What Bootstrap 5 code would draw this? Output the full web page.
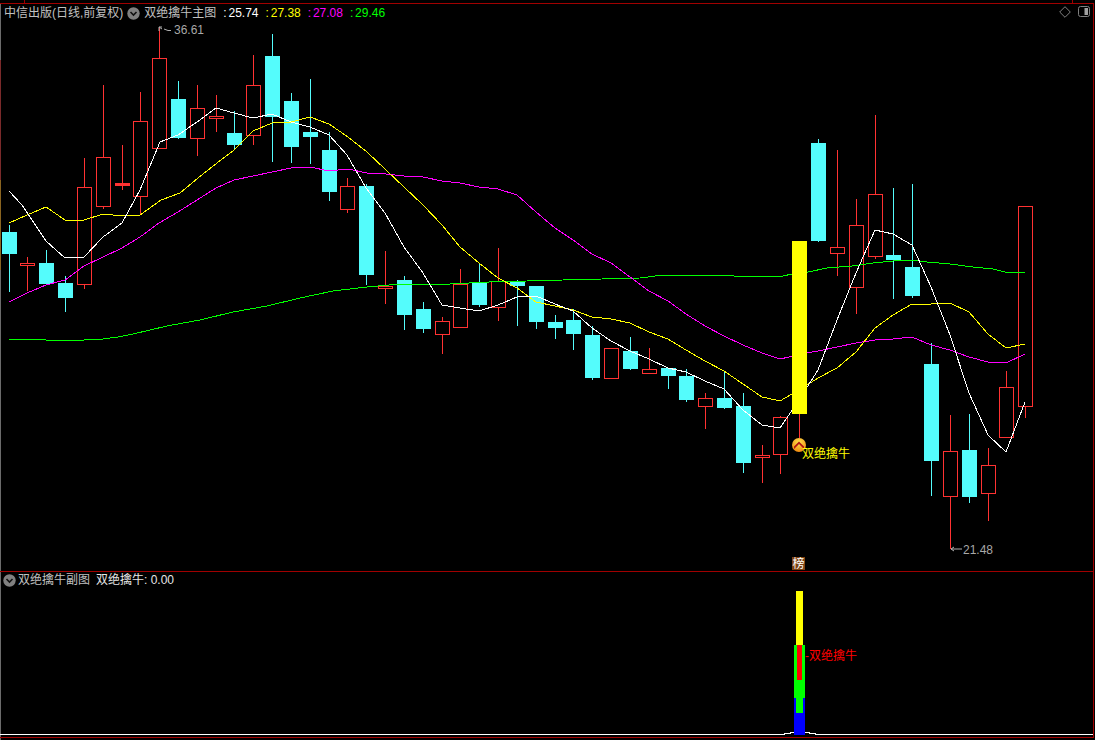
<!DOCTYPE html>
<html lang="zh-CN">
<head>
<meta charset="utf-8">
<title>双绝擒牛</title>
<link href="https://cdn.jsdelivr.net/npm/bootstrap@5.3.0/dist/css/bootstrap.min.css" rel="stylesheet">
<style>
html,body{margin:0;height:740px;overflow:hidden;background:#000;}
body{font-family:"Liberation Sans","Noto Sans CJK SC",sans-serif;font-size:12px;line-height:14px;color:#c0c0c0;}
.stage{width:1095px;height:740px;}
.pane-main{height:572px;}
.pane-sub{height:168px;}
.chart-svg{display:block;width:1095px;height:100%;}
.pane-head{top:6px;left:4px;white-space:nowrap;gap:4px;}
.pane-head-sub{top:1px;left:3px;gap:2px;}
.val-group{display:flex;gap:7px;margin-left:3px;word-spacing:-1.5px;}
.sub-title{margin-left:4px;color:#e6e6e6;}
.v-white{color:#fff;}.v-yellow{color:#ff0;}.v-magenta{color:#f0f;}.v-green{color:#0f0;}
.chev-ico{flex:none;width:13px;height:13px;display:block;}
.corner-tools{top:6px;right:4px;gap:7px;}
.svg-lab{font-family:"Liberation Sans","Noto Sans CJK SC",sans-serif;font-size:12px;}
</style>
</head>
<body>
<div class="stage d-flex flex-column">
  <section class="pane-main position-relative">
    <svg class="chart-svg" viewBox="0 0 1095 572" shape-rendering="crispEdges" fill="none" aria-label="主图K线">
      <rect x="0" y="3" width="1" height="569" fill="#6b6b6b"/>
      <rect x="0" y="60" width="1" height="120" fill="#7a2a2a"/>
      <rect x="0" y="180" width="1" height="90" fill="#8a6420"/>
      <rect x="0" y="3" width="1094" height="1" fill="#a00000"/>
      <rect x="24" y="0" width="1" height="3" fill="#a00000"/>
      <rect x="1072" y="0" width="1" height="3" fill="#a00000"/>
      <rect x="1093" y="3" width="1" height="569" fill="#a00000"/>
      <rect x="0" y="571" width="1094" height="1" fill="#a00000"/>
      <g id="candles"></g>
      <polyline stroke="#0f0" points="9,339 37,339 46,340 65,341 84,340 103,339 118,337 133,334 167,326 200,320 233,312 267,306 300,298 333,291 367,287 400,284 450,284 489,282 527,281 563,280 602,279 640,278 663,275 733,275 734,276 783,276 792,274 808,272 827,268 852,266 873,263 893,261 912,260 927,262 950,264 973,267 993,269 1005,272 1025,272"/>
      <polyline stroke="#f0f" points="9,302 27,293 46,285 65,280 84,266 103,257 122,248 140,237 159,223 178,212 197,200 216,188 234,180 253,176 272,172 291,168 310,167 329,171 348,169 367,173 386,174 404,176 423,177 442,181 460,183 479,187 498,189 517,195 536,212 555,228 573,240 592,254 611,263 630,277 649,291 668,301 686,314 705,326 724,336 743,345 762,353 780,359 807,353 818,351 837,347 856,343 875,340 893,339 912,337 931,345 950,350 969,357 988,362 1006,363 1025,354"/>
      <polyline stroke="#ff0" points="9,223 27,215 46,207 65,220 84,220 103,214 122,216 140,215 161,200 180,193 198,178 217,163 234,150 253,131 272,123 291,122 310,117 329,124 348,137 367,152 386,170 404,187 423,205 442,225 460,247 479,263 498,278 517,288 536,302 555,306 573,310 592,317 611,319 630,323 649,332 668,339 686,350 705,361 724,371 743,384 762,397 780,401 807,385 818,378 837,368 856,352 875,328 893,315 912,304 931,304 950,303 969,312 988,334 1006,348 1025,344"/>
      <polyline stroke="#fff" points="9,191 22,205 46,241 65,258 84,257 103,237 122,223 140,190 160,142 178,135 197,122 216,108 234,113 253,118 272,114 291,122 310,127 329,135 347,155 366,188 385,213 404,247 423,273 442,305 460,308 479,311 498,305 517,297 536,296 555,304 573,311 592,328 611,341 630,351 649,359 668,368 686,372 705,381 724,389 743,410 762,425 780,428 799,400 818,370 837,320 856,273 875,230 893,234 912,245 931,287 950,335 969,393 988,435 1006,452 1025,402"/>
      <rect x="799" y="414" width="1" height="24" fill="#ff3232"/>
      <rect x="792" y="241" width="15" height="173" fill="#ff0"/>
      <g shape-rendering="auto">
        <defs>
          <radialGradient id="ballGrad" cx="50%" cy="30%" r="70%">
            <stop offset="0" stop-color="#ffe14a"/><stop offset="1" stop-color="#f08a10"/>
          </radialGradient>
        </defs>
        <circle cx="799" cy="445" r="7" fill="url(#ballGrad)"/>
        <path d="M794 449l5-5 5 5v-2.500l-5-5-5 5z" fill="#b01414"/>
        <path d="M162 27h-3v4M159 27l3 2M164 29l4 1.500h3" stroke="#b0b0b0" stroke-width="1" fill="none"/>
        <path d="M951 549h11M951 549l3-2M951 549l3 2" stroke="#b0b0b0" stroke-width="1" fill="none"/>
      </g>
      <rect x="792" y="557" width="13" height="13" fill="#7d4212"/>
      <g shape-rendering="auto" text-rendering="optimizeSpeed">
        <text class="svg-lab" x="174" y="34" fill="#a8a8a8">36.61</text>
        <text class="svg-lab" x="963" y="554" fill="#a8a8a8">21.48</text>
        <text class="svg-lab" x="802" y="458" fill="#ff0">双绝擒牛</text>
        <text class="svg-lab" x="792.500" y="568" fill="#fff">榜</text>
      </g>
    </svg>
    <div class="pane-head position-absolute d-flex align-items-center">
      <span>中信出版(日线,前复权)</span>
      <svg class="chev-ico" viewBox="0 0 13 13"><circle cx="6.500" cy="6.500" r="6.200" fill="#808080"/><path d="M3.500 5l3 3 3-3" stroke="#111" stroke-width="1.600" fill="none"/></svg>
      <span>双绝擒牛主图</span>
      <span class="val-group">
        <span class="v-white">: 25.74</span>
        <span class="v-yellow">: 27.38</span>
        <span class="v-magenta">: 27.08</span>
        <span class="v-green">: 29.46</span>
      </span>
    </div>
    <div class="corner-tools position-absolute d-flex align-items-center">
      <svg width="12" height="12" viewBox="0 0 12 12"><path d="M6 .7L11.300 6 6 11.300.7 6z" stroke="#808080" fill="none"/></svg>
      <svg width="13" height="12" viewBox="0 0 13 12"><rect x=".5" y=".5" width="11" height="10" rx="2" stroke="#808080" fill="none"/><rect x="6.500" y="2" width="3.500" height="7" fill="#a0a0a0"/></svg>
    </div>
  </section>
  <section class="pane-sub position-relative">
    <svg class="chart-svg" viewBox="0 572 1095 168" shape-rendering="crispEdges" aria-label="副图">
      <rect x="0" y="572" width="1" height="168" fill="#6b6b6b"/>
      <rect x="1093" y="572" width="1" height="166" fill="#a00000"/>
      <rect x="0" y="737" width="1094" height="1" fill="#a00000"/>
      <polyline fill="none" stroke="#fff" points="0,734 784,734 784,733 790,733 790,732 809,732 809,733 815,733 815,734 1093,734"/>
      <rect x="796" y="591" width="7" height="54" fill="#ff0"/>
      <rect x="794" y="698" width="11" height="37" fill="#00f"/>
      <rect x="794" y="645" width="11" height="53" fill="#0f0"/>
      <rect x="796" y="698" width="7" height="15" fill="#0f0"/>
      <rect x="797" y="645" width="5" height="35" fill="#f00"/>
      <text class="svg-lab" x="805" y="660" fill="#f00" shape-rendering="auto">-双绝擒牛</text>
    </svg>
    <div class="pane-head pane-head-sub position-absolute d-flex align-items-center">
      <svg class="chev-ico" viewBox="0 0 13 13"><circle cx="6.500" cy="6.500" r="6.200" fill="#808080"/><path d="M3.500 5l3 3 3-3" stroke="#111" stroke-width="1.600" fill="none"/></svg>
      <span>双绝擒牛副图</span>
      <span class="sub-title">双绝擒牛: 0.00</span>
    </div>
  </section>
</div>
<script>
/* x, type (c=down solid, r=up hollow), wick top, wick bottom, body top, body bottom */
const K=[[9,'c',225,292,232,254],[27,'r',257,291,263,266],[46,'c',250,285,263,284],[65,'c',276,312,283,298],[84,'r',158,289,187,285],[103,'r',85,209,157,207],[122,'s',145,190,183,186],[140,'r',92,214,121,197],[159,'r',27,149,58,149],[178,'c',81,139,99,138],[197,'r',85,156,108,139],[216,'r',95,132,116,119],[234,'c',111,149,133,145],[253,'r',55,145,85,136],[272,'c',34,162,56,117],[291,'c',93,163,101,147],[310,'c',79,164,132,137],[329,'c',132,201,150,192],[347,'r',178,213,186,210],[366,'c',184,285,186,275],[385,'r',251,304,286,289],[404,'c',276,330,280,315],[423,'c',302,333,309,329],[442,'r',317,354,321,335],[460,'r',269,328,284,328],[479,'c',263,307,282,305],[498,'r',248,321,281,308],[517,'c',280,326,281,286],[536,'c',286,329,286,322],[555,'c',315,339,322,328],[573,'c',309,350,320,334],[592,'c',326,380,335,378],[611,'r',348,379,348,379],[630,'c',337,370,351,369],[649,'r',348,374,369,374],[668,'c',368,389,368,376],[686,'c',369,402,376,400],[705,'r',393,429,398,407],[724,'c',372,409,398,408],[743,'c',393,473,406,463],[762,'r',445,483,455,458],[780,'r',416,474,417,455],[818,'c',139,242,143,241],[837,'r',150,276,247,254],[856,'r',199,314,225,288],[875,'r',115,259,194,257],[893,'c',188,299,255,260],[912,'c',184,298,267,296],[931,'c',343,496,364,461],[950,'r',415,549,451,497],[969,'c',414,503,450,497],[988,'r',448,521,465,494],[1006,'r',371,438,387,438],[1025,'r',206,418,206,407]];
const NS='http://www.w3.org/2000/svg',host=document.getElementById('candles');
function add(x,y,w,h,fill,stroke){const r=document.createElementNS(NS,'rect');r.setAttribute('x',x);r.setAttribute('y',y);r.setAttribute('width',w);r.setAttribute('height',h);r.setAttribute('fill',fill);if(stroke)r.setAttribute('stroke',stroke);host.appendChild(r);}
K.forEach(([x,t,wt,wb,bt,bb])=>{
  if(t==='r'){
    if(bt>wt)add(x,wt,1,bt-wt,'#ff3232');
    if(wb>bb)add(x,bb,1,wb-bb,'#ff3232');
    add(x-6.5,bt+.5,14,bb-bt-1,'#000','#ff3232');
  }else if(t==='s'){
    add(x,wt,1,wb-wt,'#ff3232');add(x-7,bt,15,bb-bt,'#ff3232');
  }else{
    add(x,wt,1,wb-wt,'#54fcfc');add(x-7,bt,15,bb-bt,'#54fcfc');
  }
});
</script>
<script src="https://cdn.jsdelivr.net/npm/bootstrap@5.3.0/dist/js/bootstrap.bundle.min.js"></script>
</body>
</html>
